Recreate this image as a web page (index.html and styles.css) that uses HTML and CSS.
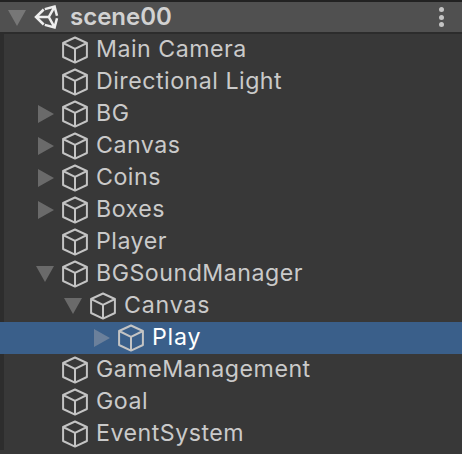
FILE: index.html
```
<!DOCTYPE html>
<html lang="en">
<head>
<meta charset="utf-8">
<title>Hierarchy</title>
<link rel="stylesheet" href="styles.css">
</head>
<body>
<svg class="defs" aria-hidden="true">
  <symbol id="cube" viewBox="0 0 28 30"><path d="M14 2.5 25.9 8V22L14 27.6 2.1 22V8ZM2.1 8 14 13.8 25.9 8M14 13.8V27.6"/></symbol>
  <symbol id="scene" viewBox="0 0 26 24"><path d="M10.8 4.1 20.6 1.6 23 10.8M23 13.2 20.6 22.4 10.8 19.9M9.7 4.5 2 12 9.7 19.5M2 12H14.8M20.6 1.6 14.8 12 20.6 22.4"/></symbol>
</svg>
<main class="panel">
  <header class="scene"><i class="arrow open"></i><svg class="logo"><use href="#scene"/></svg><span class="title">scene00</span><span class="menu"><i></i><i></i><i></i></span></header>
  <ul class="tree">
    <li><i class="arrow"></i><svg class="cube"><use href="#cube"/></svg><span>Main Camera</span></li>
    <li><i class="arrow"></i><svg class="cube"><use href="#cube"/></svg><span>Directional Light</span></li>
    <li><i class="arrow closed"></i><svg class="cube"><use href="#cube"/></svg><span>BG</span></li>
    <li><i class="arrow closed"></i><svg class="cube"><use href="#cube"/></svg><span>Canvas</span></li>
    <li><i class="arrow closed"></i><svg class="cube"><use href="#cube"/></svg><span>Coins</span></li>
    <li><i class="arrow closed"></i><svg class="cube"><use href="#cube"/></svg><span>Boxes</span></li>
    <li><i class="arrow"></i><svg class="cube"><use href="#cube"/></svg><span>Player</span></li>
    <li><i class="arrow open"></i><svg class="cube"><use href="#cube"/></svg><span>BGSoundManager</span></li>
    <li class="level-2"><i class="arrow open"></i><svg class="cube"><use href="#cube"/></svg><span class="wide">Canvas</span></li>
    <li class="level-3 selected"><i class="arrow closed"></i><svg class="cube"><use href="#cube"/></svg><span class="wide">Play</span></li>
    <li><i class="arrow"></i><svg class="cube"><use href="#cube"/></svg><span>GameManagement</span></li>
    <li><i class="arrow"></i><svg class="cube"><use href="#cube"/></svg><span>Goal</span></li>
    <li><i class="arrow"></i><svg class="cube"><use href="#cube"/></svg><span>EventSystem</span></li>
  </ul>
</main>
</body>
</html>
```
FILE: styles.css
```
* { box-sizing: border-box; }
body { margin: 0; background: #383838; color: #cacaca; font: 400 23.2px/32px Inter, sans-serif; letter-spacing: .5px; }
.defs { display: none; }
.panel { height: 454px; overflow: hidden; }
.scene { display: flex; align-items: center; height: 34px; padding-left: 8px; background: #505050; border-top: 2px solid #222; border-bottom: 2px solid #2c2c2c; }
.arrow { flex: none; width: 18px; height: 18px; }
.open { background: #6a6a6a; clip-path: polygon(0 6%, 100% 6%, 50% 94%); }
.closed { background: #6a6a6a; clip-path: polygon(11% 0, 100% 50%, 11% 100%); }
.scene .open { margin-top: 2px; background: #777; }
.logo { width: 26px; height: 24px; margin-left: 8px; fill: none; stroke: #eee; stroke-width: 2.5; }
.title { margin-left: 10px; font-size: 24px; font-weight: 600; letter-spacing: 0; color: #d2d2d2; }
.menu { display: grid; gap: 2.5px; margin-left: auto; padding-right: 18px; }
.menu i { width: 5px; height: 5px; border-radius: 50%; background: #c4c4c4; }
.tree { margin: 0; padding: 0; list-style: none; background: linear-gradient(to right, #2d2d2d 4px, transparent 4px); }
.tree li { display: flex; align-items: center; height: 32px; padding-left: 36px; }
.tree span { padding-bottom: 2px; }
.tree .wide { letter-spacing: .8px; }
.tree .level-2 { padding-left: 64px; }
.tree .level-3 { padding-left: 92px; }
.tree .selected { background: #3a5f8a; color: #fff; }
.selected .closed { background: #6b809b; }
.cube { flex: none; width: 28px; height: 30px; margin: 0 7px; fill: none; stroke: #c4c4c4; stroke-width: 2; stroke-linejoin: round; }
```
